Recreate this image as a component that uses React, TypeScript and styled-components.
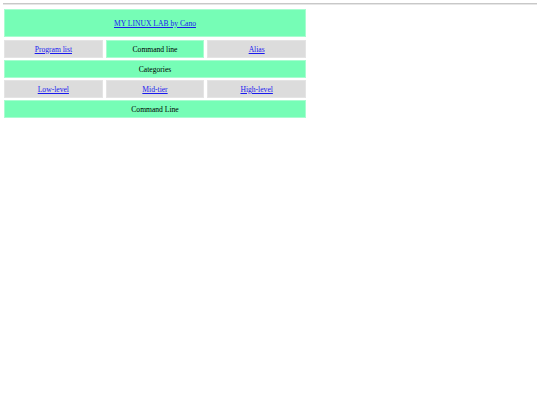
import styled, { createGlobalStyle } from 'styled-components';

const Global = createGlobalStyle`
  body {
    margin: 0;
    padding: 3px 3px;
    font-family: "Liberation Serif", "Times New Roman", serif;
    font-size: 7.6px;
    background: #fff;
  }
`;

const Rule = styled.hr`
  margin: 0 0 4px 0;
  border: none;
  border-top: 1px solid #c8c8c8;
  border-bottom: 1px solid #e6e6e6;
`;

const Menu = styled.div`
  width: 302px;
  margin-left: 1px;
  display: flex;
  flex-direction: column;
  gap: 2px;
`;

const Row = styled.div`
  display: grid;
  grid-template-columns: repeat(3, 1fr);
  gap: 3px;
`;

const Cell = styled.div<{ $tone: 'green' | 'gray'; $tall?: boolean }>`
  height: ${(p) => (p.$tall ? 28 : 18)}px;
  margin-bottom: ${(p) => (p.$tall ? 1 : 0)}px;
  display: flex;
  align-items: center;
  justify-content: center;
  background: ${(p) => (p.$tone === 'green' ? '#76fdb6' : '#dcdcdc')};
  box-shadow: inset 0 0 0 1px ${(p) => (p.$tone === 'green' ? '#a8fdd0' : '#e4e4e4')};
  color: #000;

  a {
    color: #1a1aee;
    text-decoration: underline;
  }
`;

export default function App() {
  return (
    <>
      <Global />
      <Rule />
      <Menu>
        <Cell $tone="green" $tall>
          <a href="#">MY LINUX LAB by Cano</a>
        </Cell>
        <Row>
          <Cell $tone="gray"><a href="#">Program list</a></Cell>
          <Cell $tone="green">Command line</Cell>
          <Cell $tone="gray"><a href="#">Alias</a></Cell>
        </Row>
        <Cell $tone="green">Categories</Cell>
        <Row>
          <Cell $tone="gray"><a href="#">Low-level</a></Cell>
          <Cell $tone="gray"><a href="#">Mid-tier</a></Cell>
          <Cell $tone="gray"><a href="#">High-level</a></Cell>
        </Row>
        <Cell $tone="green">Command Line</Cell>
      </Menu>
    </>
  );
}
